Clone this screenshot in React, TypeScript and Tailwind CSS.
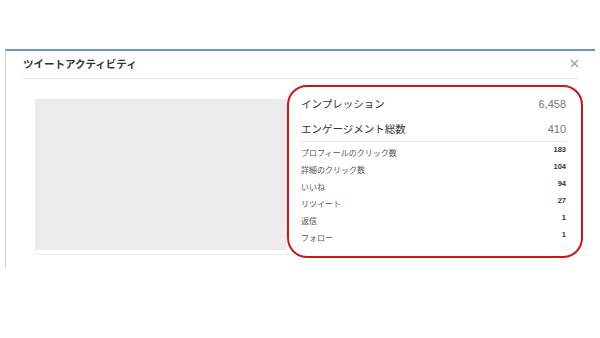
const rows = [
  { label: "プロフィールのクリック数", value: "183" },
  { label: "詳細のクリック数", value: "104" },
  { label: "いいね", value: "94" },
  { label: "リツイート", value: "27" },
  { label: "返信", value: "1" },
  { label: "フォロー", value: "1" },
];

const jp = "font-['Noto_Sans_CJK_JP','Noto_Sans',sans-serif]";
const num = "font-['Liberation_Sans',Arial,sans-serif]";

export default function App() {
  return (
    <div className="w-[600px] h-[338px] bg-white overflow-hidden">
      <div className="mt-[49px] ml-[5px] w-[590px] h-[218px] border-t-2 border-t-[#6d94c5] border-l border-l-[#cfcfcf] bg-white">
        {/* header */}
        <div className="mx-[17px] h-[28px] flex items-center justify-between border-b border-[#e4e4e4]">
          <h2 className={`${jp} text-[10.5px] font-bold text-[#333] leading-none`}>
            ツイートアクティビティ
          </h2>
          <svg width="9" height="9" viewBox="0 0 9 9" className="mr-[-1px] mt-[-2px]">
            <path d="M1 1L8 8M8 1L1 8" stroke="#9a9a9a" strokeWidth="1.2" />
          </svg>
        </div>

        {/* body */}
        <div className="flex items-start">
          <div className="ml-[29px] mt-[20px] w-[252px] border border-[#ededed] bg-white pb-[4px]">
            <div className="h-[150px] bg-[#ececec]" />
          </div>

          <div className="mt-[6px] w-[296px] h-[173px] border-2 border-[#d0141c] rounded-[20px] pl-[12px] pr-[15px] pt-[5px]">
            <div className="h-[24px] flex items-center justify-between">
              <span className={`${jp} text-[10.5px] text-[#333] leading-none`}>インプレッション</span>
              <span className={`${num} text-[11px] text-[#777] leading-none`}>6,458</span>
            </div>
            <div className="h-[25px] pt-[2px] flex items-center justify-between">
              <span className={`${jp} text-[10.5px] text-[#333] leading-none`}>エンゲージメント総数</span>
              <span className={`${num} text-[11px] text-[#777] leading-none`}>410</span>
            </div>
            <div className="border-t border-[#e6e6e6] pt-[2px]">
              {rows.map((r) => (
                <div key={r.label} className="h-[17px] flex items-center justify-between">
                  <span className={`${jp} text-[8px] text-[#555] leading-none`}>{r.label}</span>
                  <span className={`${num} text-[7.5px] font-bold text-[#333] leading-none -translate-y-[3px]`}>
                    {r.value}
                  </span>
                </div>
              ))}
            </div>
          </div>
        </div>
      </div>
    </div>
  );
}
